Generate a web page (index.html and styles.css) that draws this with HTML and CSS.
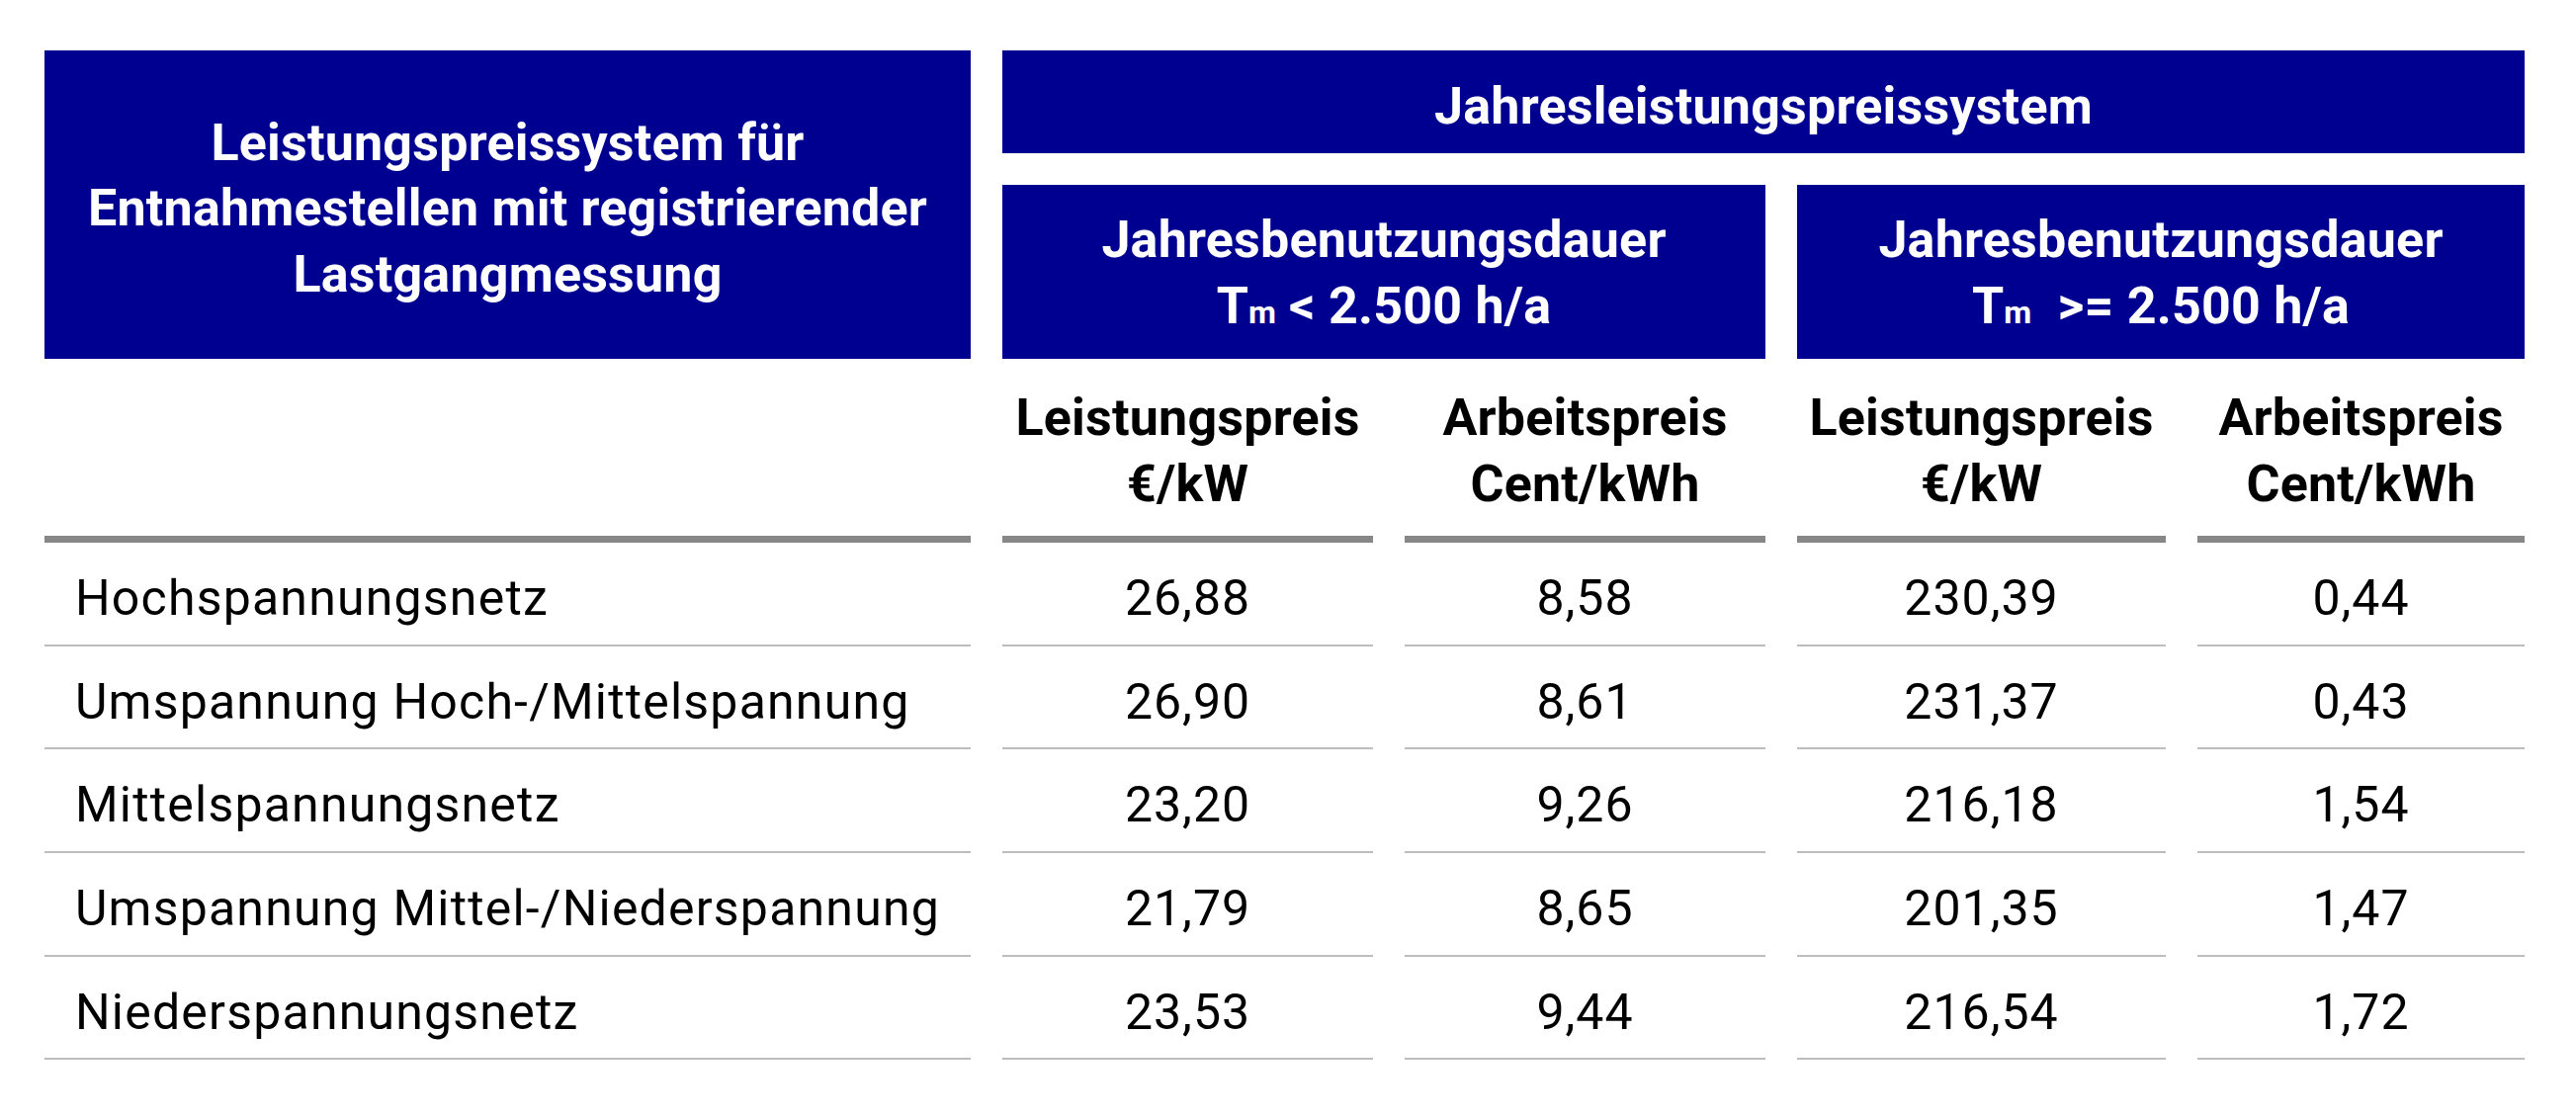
FILE: index.html
```html
<!DOCTYPE html>
<html lang="de">
<head>
<meta charset="utf-8">
<title>Leistungspreissystem</title>
<link rel="stylesheet" href="styles.css">
</head>
<body>
<div class="price-table">
  <div class="hd hd-main"><div class="txt">Leistungspreissystem für<br>Entnahmestellen mit registrierender<br>Lastgangmessung</div></div>
  <div class="hd hd-top"><div class="txt">Jahresleistungspreissystem</div></div>
  <div class="hd hd-sub hd-sub-a"><div class="txt">Jahresbenutzungsdauer<br>T<span class="sub">m</span> &lt; 2.500 h/a</div></div>
  <div class="hd hd-sub hd-sub-b"><div class="txt">Jahresbenutzungsdauer<br>T<span class="sub">m</span>&nbsp; &gt;= 2.500 h/a</div></div>

  <div class="colhd"></div>
  <div class="colhd"><div class="txt">Leistungspreis<br>€/kW</div></div>
  <div class="colhd"><div class="txt">Arbeitspreis<br>Cent/kWh</div></div>
  <div class="colhd"><div class="txt">Leistungspreis<br>€/kW</div></div>
  <div class="colhd"><div class="txt">Arbeitspreis<br>Cent/kWh</div></div>

  <div class="cell label">Hochspannungsnetz</div>
  <div class="cell">26,88</div>
  <div class="cell">8,58</div>
  <div class="cell">230,39</div>
  <div class="cell">0,44</div>

  <div class="cell label">Umspannung Hoch-/Mittelspannung</div>
  <div class="cell">26,90</div>
  <div class="cell">8,61</div>
  <div class="cell">231,37</div>
  <div class="cell">0,43</div>

  <div class="cell label">Mittelspannungsnetz</div>
  <div class="cell">23,20</div>
  <div class="cell">9,26</div>
  <div class="cell">216,18</div>
  <div class="cell">1,54</div>

  <div class="cell label">Umspannung Mittel-/Niederspannung</div>
  <div class="cell">21,79</div>
  <div class="cell">8,65</div>
  <div class="cell">201,35</div>
  <div class="cell">1,47</div>

  <div class="cell label">Niederspannungsnetz</div>
  <div class="cell">23,53</div>
  <div class="cell">9,44</div>
  <div class="cell">216,54</div>
  <div class="cell">1,72</div>
</div>
</body>
</html>
```

FILE: styles.css
```css
html, body {
  margin: 0;
  padding: 0;
  background: #ffffff;
}

body {
  font-family: Roboto, "Liberation Sans", Arial, sans-serif;
  color: #000000;
}

.price-table {
  display: grid;
  grid-template-columns: 937px 375px 365px 373px 331px;
  grid-template-rows: 104px 208px 186px repeat(5, 104.7px);
  column-gap: 32px;
  padding: 51px 0 0 45px;
}

.hd {
  background: #000090;
  color: #ffffff;
  font-weight: 700;
  font-size: 52px;
  line-height: 66.6px;
  text-align: center;
  display: flex;
  align-items: center;
  justify-content: center;
  letter-spacing: 0.2px;
}

.txt {
  text-align: center;
}

.hd-main {
  grid-column: 1;
  grid-row: 1 / span 2;
  padding-top: 9px;
}

.hd-top {
  grid-column: 2 / span 4;
  grid-row: 1;
  padding-top: 10px;
}

.hd-sub {
  grid-row: 2;
  margin-top: 32px;
  padding-top: 10px;
}

.hd-sub-a { grid-column: 2 / span 2; }
.hd-sub-b { grid-column: 4 / span 2; }

.sub {
  font-size: 62%;
  letter-spacing: 0;
}

.colhd {
  grid-row: 3;
  border-bottom: 7px solid #878787;
  font-weight: 700;
  font-size: 52px;
  line-height: 66.6px;
  text-align: center;
  display: flex;
  align-items: center;
  justify-content: center;
  padding-top: 8px;
  letter-spacing: 0.2px;
}

.cell {
  border-bottom: 2px solid #bdbdbd;
  font-size: 50px;
  line-height: 60px;
  padding-top: 26px;
  text-align: center;
  letter-spacing: 1px;
}

.cell.label {
  text-align: left;
  padding-left: 31px;
  letter-spacing: 1.2px;
}
```
